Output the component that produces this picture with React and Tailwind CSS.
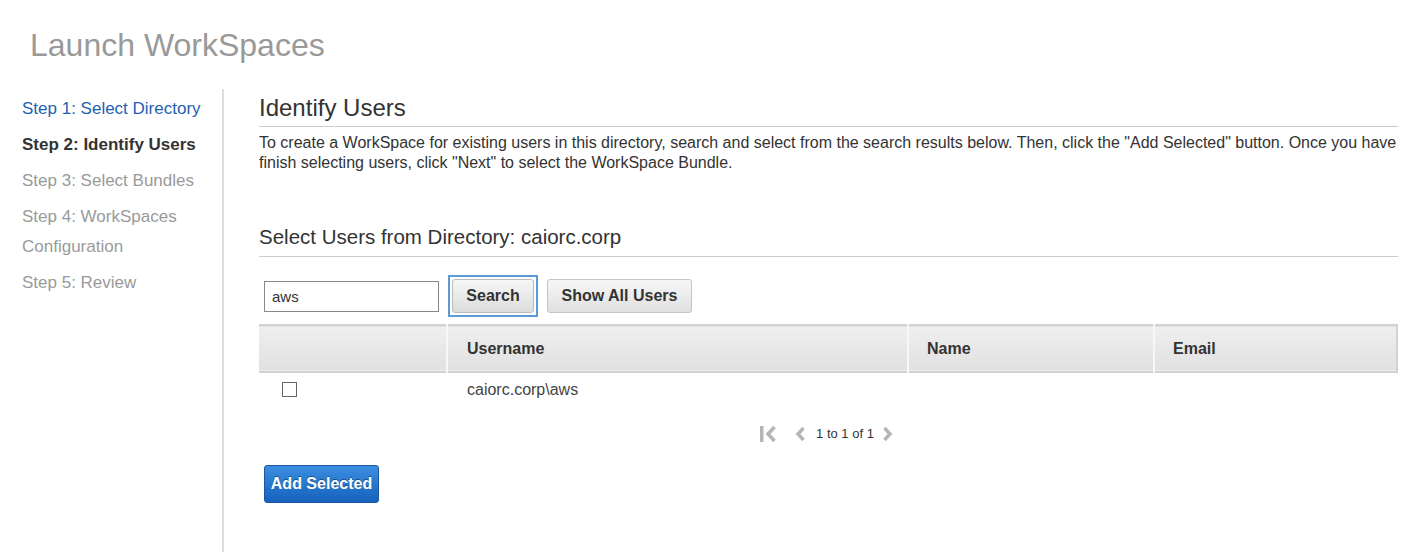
import React, { useState } from 'react';

const steps = [
  { label: 'Step 1: Select Directory', state: 'done' },
  { label: 'Step 2: Identify Users', state: 'current' },
  { label: 'Step 3: Select Bundles', state: 'todo' },
  { label: 'Step 4: WorkSpaces Configuration', state: 'todo' },
  { label: 'Step 5: Review', state: 'todo' },
];

const stepClass = {
  done: 'text-[#1e5fb3]',
  current: 'text-[#333] font-bold',
  todo: 'text-[#9a9a9a]',
};

// Pagination glyphs
const FirstIcon = () => (
  <svg width="18" height="18" viewBox="0 0 18 18" className="text-[#b5b5b5]">
    <rect x="1" y="1" width="3.5" height="16" fill="currentColor" />
    <path d="M15.5 2 L9 9 L15.5 16" stroke="currentColor" strokeWidth="3.6" fill="none" />
  </svg>
);

const PrevIcon = () => (
  <svg width="12" height="18" viewBox="0 0 12 18" className="text-[#b5b5b5]">
    <path d="M9.5 3 L4 9 L9.5 15" stroke="currentColor" strokeWidth="3.4" fill="none" />
  </svg>
);

const NextIcon = () => (
  <svg width="12" height="18" viewBox="0 0 12 18" className="text-[#b5b5b5]">
    <path d="M2.5 3 L8 9 L2.5 15" stroke="currentColor" strokeWidth="3.4" fill="none" />
  </svg>
);

const App = () => {
  const [query, setQuery] = useState('aws');
  const [checked, setChecked] = useState(false);

  return (
    <div className="min-h-[552px] bg-white font-['Liberation_Sans',Arial,sans-serif] text-[#333]">
      <h1 className="pl-[30px] pt-[26px] text-[32px] leading-[38px] text-[#999]">Launch WorkSpaces</h1>

      <div className="mt-[25px] flex">
        {/* Wizard steps */}
        <ul className="w-[224px] shrink-0 border-r-2 border-[#ddd] pl-[22px] pt-[5px] min-h-[463px]">
          {steps.map((s) => (
            <li key={s.label} className={`w-[190px] text-[17px] leading-[30px] mb-[6px] ${stepClass[s.state]}`}>
              {s.label}
            </li>
          ))}
        </ul>

        {/* Main panel */}
        <div className="flex-1 pl-[35px] pr-[5px]">
          <h2 className="text-[24px] leading-[28px] pt-[5px] pb-[4px] border-b border-[#ccc] text-[#333]">Identify Users</h2>
          <p className="mt-[6px] text-[16px] leading-[20px] text-[#333]">
            To create a WorkSpace for existing users in this directory, search and select from the search results below. Then, click the "Add Selected" button. Once you have finish selecting users, click "Next" to select the WorkSpace Bundle.
          </p>

          <h3 className="mt-[52px] text-[20.5px] leading-[24px] pb-[7px] border-b border-[#ccc] text-[#333]">
            Select Users from Directory: caiorc.corp
          </h3>

          <div className="mt-[18px] flex items-center pl-[5px]">
            <input
              value={query}
              onChange={(e) => setQuery(e.target.value)}
              className="h-[31px] w-[175px] border border-[#888] px-[7px] text-[15px] text-[#333] outline-none"
            />
            <div className="ml-[9px] border-2 border-[#5a9bd5] p-[2px]">
              <button className="h-[34px] w-[82px] rounded-[3px] border border-[#bbb] bg-gradient-to-b from-[#f7f7f7] to-[#dcdcdc] text-[16px] font-bold text-[#333]">
                Search
              </button>
            </div>
            <button className="ml-[9px] h-[34px] w-[145px] rounded-[3px] border border-[#c4c4c4] bg-gradient-to-b from-[#f7f7f7] to-[#e0e0e0] text-[16px] font-bold text-[#333]">
              Show All Users
            </button>
          </div>

          <table className="mt-[7px] w-full border-collapse text-[16px]">
            <thead>
              <tr className="h-[47px] bg-gradient-to-b from-[#efefef] to-[#e1e1e1] border-t-2 border-b-2 border-[#d2d2d2]">
                <th className="w-[188px] border-r-2 border-[#f7f7f7]"></th>
                <th className="w-[461px] border-r-2 border-[#f7f7f7] pl-[19px] text-left font-bold text-[#333]">Username</th>
                <th className="w-[246px] border-r-2 border-[#f7f7f7] pl-[18px] text-left font-bold text-[#333]">Name</th>
                <th className="pl-[18px] text-left font-bold text-[#333] border-r-2 border-[#d2d2d2]">Email</th>
              </tr>
            </thead>
            <tbody>
              <tr className="h-[34px]">
                <td className="pl-[23px] align-middle">
                  <input
                    type="checkbox"
                    checked={checked}
                    onChange={() => setChecked(!checked)}
                    className="block h-[15px] w-[15px] appearance-none border border-[#666] bg-white checked:bg-[#1e5fb3]"
                  />
                </td>
                <td className="pl-[20px] text-[#444]">caiorc.corp\aws</td>
                <td></td>
                <td></td>
              </tr>
            </tbody>
          </table>

          <div className="mt-[18px] flex items-center justify-center pr-[4px] text-[13px] text-[#333]">
            <FirstIcon />
            <span className="ml-[17px] mr-[10px]"><PrevIcon /></span>
            <span>1 to 1 of 1</span>
            <span className="ml-[8px]"><NextIcon /></span>
          </div>

          <button className="ml-[5px] mt-[21px] h-[38px] w-[115px] rounded-[3px] border border-[#1a57a0] bg-gradient-to-b from-[#3a8ee0] to-[#1562bd] text-[16px] font-bold text-white [text-shadow:0_-1px_0_rgba(0,0,0,0.4)]">
            Add Selected
          </button>
        </div>
      </div>
    </div>
  );
};

export default App;
